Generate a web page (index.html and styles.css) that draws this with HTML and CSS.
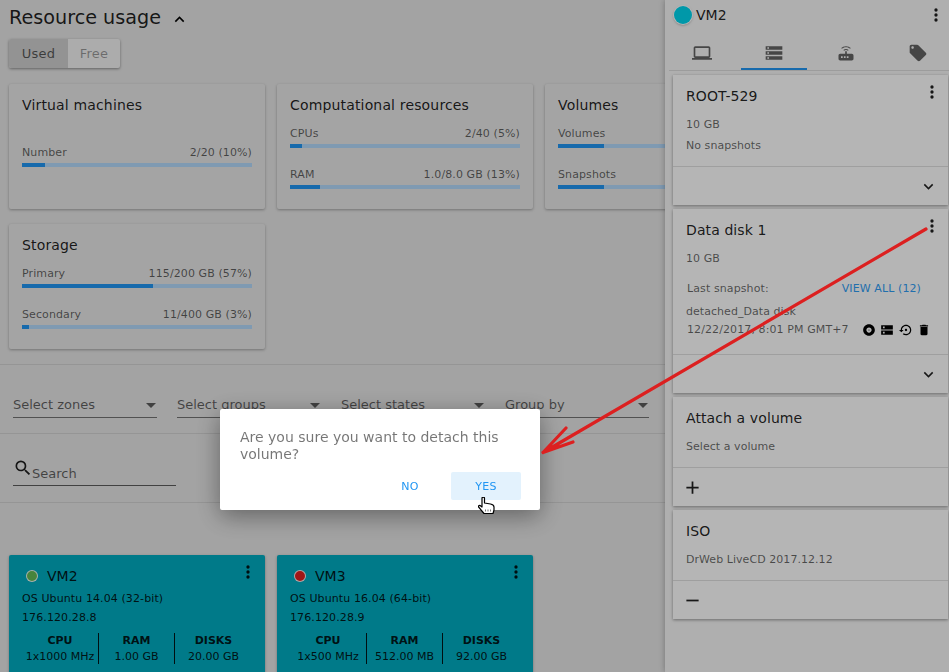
FILE: index.html
```html
<!DOCTYPE html>
<html lang="en">
  <head>
    <meta charset="UTF-8" />
    <meta name="viewport" content="width=device-width, initial-scale=1.0" />
    <title>Resource usage</title>
    <link rel="stylesheet" href="styles.css">
  </head>
  <body>
    <div id="wrap">
      <div id="main">
        <div class="head">
          <h1>Resource usage</h1>
          <svg class="chevron" viewBox="0 0 24 24" width="19" height="19"><path d="M7.41 15.41 12 10.83l4.59 4.58L18 14l-6-6-6 6z"/></svg>
        </div>
        <div class="toggle">
          <span class="on">Used</span>
          <span class="off">Free</span>
        </div>

        <div class="stats">
          <div class="stat">
            <h2>Virtual machines</h2>
            <div class="meter first_meter">
              <div class="meter_label"><span>Number</span><span>2/20 (10%)</span></div>
              <div class="bar"><div class="fill" style="width: 10%"></div></div>
            </div>
          </div>
          <div class="stat">
            <h2>Computational resources</h2>
            <div class="meter">
              <div class="meter_label"><span>CPUs</span><span>2/40 (5%)</span></div>
              <div class="bar"><div class="fill" style="width: 5%"></div></div>
            </div>
            <div class="meter">
              <div class="meter_label"><span>RAM</span><span>1.0/8.0 GB (13%)</span></div>
              <div class="bar"><div class="fill" style="width: 13%"></div></div>
            </div>
          </div>
          <div class="stat">
            <h2>Volumes</h2>
            <div class="meter">
              <div class="meter_label"><span>Volumes</span></div>
              <div class="bar"><div class="fill" style="width: 20%"></div></div>
            </div>
            <div class="meter">
              <div class="meter_label"><span>Snapshots</span></div>
              <div class="bar"><div class="fill" style="width: 20%"></div></div>
            </div>
          </div>
          <div class="stat">
            <h2>Storage</h2>
            <div class="meter">
              <div class="meter_label"><span>Primary</span><span>115/200 GB (57%)</span></div>
              <div class="bar"><div class="fill" style="width: 57%"></div></div>
            </div>
            <div class="meter">
              <div class="meter_label"><span>Secondary</span><span>11/400 GB (3%)</span></div>
              <div class="bar"><div class="fill" style="width: 3%"></div></div>
            </div>
          </div>
        </div>

        <div class="filters">
          <div class="select"><span>Select zones</span><i class="caret"></i></div>
          <div class="select"><span>Select groups</span><i class="caret"></i></div>
          <div class="select"><span>Select states</span><i class="caret"></i></div>
          <div class="select"><span>Group by</span><i class="caret"></i></div>
        </div>

        <div class="search_row">
          <div class="search">
            <svg viewBox="0 0 24 24" width="20" height="20"><path d="M15.5 14h-.79l-.28-.27A6.47 6.47 0 0 0 16 9.5 6.5 6.5 0 1 0 9.5 16c1.61 0 3.09-.59 4.23-1.57l.27.28v.79l5 4.99L20.49 19l-4.99-5zm-6 0C7.01 14 5 11.99 5 9.5S7.01 5 9.5 5 14 7.01 14 9.5 11.99 14 9.5 14z"/></svg>
            <span>Search</span>
          </div>
        </div>

        <div class="vms">
          <div class="vm">
            <div class="vm_title">
              <i class="dot green"></i><span>VM2</span>
              <svg class="dots" viewBox="0 0 24 24" width="20" height="20"><path d="M12 8a2 2 0 1 0 0-4 2 2 0 0 0 0 4zm0 2a2 2 0 1 0 0 4 2 2 0 0 0 0-4zm0 6a2 2 0 1 0 0 4 2 2 0 0 0 0-4z"/></svg>
            </div>
            <p>OS Ubuntu 14.04 (32-bit)</p>
            <p>176.120.28.8</p>
            <div class="specs">
              <div class="spec"><b>CPU</b><span>1x1000 MHz</span></div>
              <div class="spec"><b>RAM</b><span>1.00 GB</span></div>
              <div class="spec"><b>DISKS</b><span>20.00 GB</span></div>
            </div>
          </div>
          <div class="vm">
            <div class="vm_title">
              <i class="dot red"></i><span>VM3</span>
              <svg class="dots" viewBox="0 0 24 24" width="20" height="20"><path d="M12 8a2 2 0 1 0 0-4 2 2 0 0 0 0 4zm0 2a2 2 0 1 0 0 4 2 2 0 0 0 0-4zm0 6a2 2 0 1 0 0 4 2 2 0 0 0 0-4z"/></svg>
            </div>
            <p>OS Ubuntu 16.04 (64-bit)</p>
            <p>176.120.28.9</p>
            <div class="specs">
              <div class="spec"><b>CPU</b><span>1x500 MHz</span></div>
              <div class="spec"><b>RAM</b><span>512.00 MB</span></div>
              <div class="spec"><b>DISKS</b><span>92.00 GB</span></div>
            </div>
          </div>
        </div>
      </div>

      <div id="side">
        <div class="side_head">
          <i class="vm_color"></i>
          <span>VM2</span>
          <svg class="dots" viewBox="0 0 24 24" width="20" height="20"><path d="M12 8a2 2 0 1 0 0-4 2 2 0 0 0 0 4zm0 2a2 2 0 1 0 0 4 2 2 0 0 0 0-4zm0 6a2 2 0 1 0 0 4 2 2 0 0 0 0-4z"/></svg>
        </div>
        <div class="tabs">
          <div class="tab">
            <svg viewBox="0 0 24 24" width="20" height="20"><path d="M20 18c1.100 0 2-.9 2-2V6c0-1.100-.9-2-2-2H4c-1.100 0-2 .9-2 2v10c0 1.100.9 2 2 2H0v2h24v-2h-4zM4 6h16v10H4V6z"/></svg>
          </div>
          <div class="tab active">
            <svg viewBox="0 0 24 24" width="20" height="20"><path d="M2 20h20v-4H2v4zm2-3h2v2H4v-2zM2 4v4h20V4H2zm4 3H4V5h2v2zm-4 7h20v-4H2v4zm2-3h2v2H4v-2z"/></svg>
          </div>
          <div class="tab">
            <svg viewBox="0 0 24 24" width="20" height="20"><path d="M16.900 6.900l.8-.8C16.700 5.100 14.400 3.900 12 3.900s-4.700 1.200-5.700 2.200l.8.8C8.100 6 10 5.200 12 5.200s3.900.8 4.900 1.700zm-1.700 1.500c-.9-.8-2-1.200-3.200-1.200s-2.300.4-3.200 1.200l.9.9c.6-.5 1.400-.8 2.300-.8s1.700.3 2.300.8l.9-.9zM19 13h-6V10h-2v3H5c-1.100 0-2 .9-2 2v4c0 1.100.9 2 2 2h14c1.100 0 2-.9 2-2v-4c0-1.100-.9-2-2-2zM8 18H6v-2h2v2zm3.500 0h-2v-2h2v2zm3.500 0h-2v-2h2v2z"/></svg>
          </div>
          <div class="tab">
            <svg viewBox="0 0 24 24" width="20" height="20"><path d="M21.410 11.580l-9-9C12.050 2.220 11.550 2 11 2H4c-1.100 0-2 .9-2 2v7c0 .55.22 1.050.59 1.420l9 9c.36.36.86.58 1.410.58.55 0 1.050-.22 1.410-.59l7-7c.37-.36.59-.86.59-1.410 0-.55-.23-1.060-.59-1.420zM5.500 7C4.670 7 4 6.330 4 5.500S4.670 4 5.500 4 7 4.670 7 5.500 6.330 7 5.500 7z"/></svg>
          </div>
        </div>

        <div class="card">
          <div class="card_body">
            <div class="card_title">
              <h3>ROOT-529</h3>
              <svg class="dots" viewBox="0 0 24 24" width="20" height="20"><path d="M12 8a2 2 0 1 0 0-4 2 2 0 0 0 0 4zm0 2a2 2 0 1 0 0 4 2 2 0 0 0 0-4zm0 6a2 2 0 1 0 0 4 2 2 0 0 0 0-4z"/></svg>
            </div>
            <p>10 GB</p>
            <p>No snapshots</p>
          </div>
          <div class="card_foot right">
            <svg viewBox="0 0 24 24" width="19" height="19"><path d="M7.41 8.590 12 13.170l4.590-4.580L18 10l-6 6-6-6z"/></svg>
          </div>
        </div>

        <div class="card">
          <div class="card_body disk">
            <div class="card_title">
              <h3>Data disk 1</h3>
              <svg class="dots" viewBox="0 0 24 24" width="20" height="20"><path d="M12 8a2 2 0 1 0 0-4 2 2 0 0 0 0 4zm0 2a2 2 0 1 0 0 4 2 2 0 0 0 0-4zm0 6a2 2 0 1 0 0 4 2 2 0 0 0 0-4z"/></svg>
            </div>
            <p>10 GB</p>
            <div class="snap_head"><span>Last snapshot:</span><a>VIEW ALL (12)</a></div>
            <p class="snap_name">detached_Data disk</p>
            <div class="snap_row">
              <span>12/22/2017, 8:01 PM GMT+7</span>
              <div class="snap_icons">
                <svg viewBox="0 0 24 24" width="14" height="14"><path d="M12 2C6.480 2 2 6.480 2 12s4.480 10 10 10 10-4.480 10-10S17.520 2 12 2zm0 14.500c-2.490 0-4.500-2.010-4.500-4.500S9.510 7.500 12 7.500s4.500 2.010 4.500 4.500-2.010 4.500-4.500 4.500zm0-5.500c-.55 0-1 .45-1 1s.45 1 1 1 1-.45 1-1-.45-1-1-1z"/></svg>
                <svg viewBox="0 0 24 24" width="14" height="14"><path d="M2 20h20v-7H2v7zm3-5h3v3H5v-3zM2 4v7h20V4H2zm6 5H5V6h3v3z"/></svg>
                <svg viewBox="0 0 24 24" width="14" height="14"><path d="M14 12c0-1.100-.9-2-2-2s-2 .9-2 2 .9 2 2 2 2-.9 2-2zm-2-9c-4.970 0-9 4.030-9 9H0l4 4 4-4H5c0-3.870 3.130-7 7-7s7 3.130 7 7-3.130 7-7 7c-1.510 0-2.910-.49-4.060-1.300l-1.420 1.440C8.040 20.300 9.940 21 12 21c4.970 0 9-4.030 9-9s-4.030-9-9-9z"/></svg>
                <svg viewBox="0 0 24 24" width="14" height="14"><path d="M6 19c0 1.100.9 2 2 2h8c1.100 0 2-.9 2-2V7H6v12zM19 4h-3.500l-1-1h-5l-1 1H5v2h14V4z"/></svg>
              </div>
            </div>
          </div>
          <div class="card_foot right">
            <svg viewBox="0 0 24 24" width="19" height="19"><path d="M7.41 8.590 12 13.170l4.590-4.580L18 10l-6 6-6-6z"/></svg>
          </div>
        </div>

        <div class="card">
          <div class="card_body short">
            <div class="card_title"><h3>Attach a volume</h3></div>
            <p>Select a volume</p>
          </div>
          <div class="card_foot">
            <svg viewBox="0 0 24 24" width="21" height="21"><path d="M19 13h-6v6h-2v-6H5v-2h6V5h2v6h6v2z"/></svg>
          </div>
        </div>

        <div class="card">
          <div class="card_body short">
            <div class="card_title"><h3>ISO</h3></div>
            <p>DrWeb LiveCD 2017.12.12</p>
          </div>
          <div class="card_foot">
            <svg viewBox="0 0 24 24" width="21" height="21"><path d="M19 13H5v-2h14v2z"/></svg>
          </div>
        </div>
      </div>
    </div>

    <div id="backdrop"></div>

    <div id="dialog">
      <p>Are you sure you want to detach this volume?</p>
      <div class="dialog_btns">
        <button class="no">NO</button>
        <button class="yes">YES</button>
      </div>
    </div>

    <svg id="arrow" viewBox="0 0 949 672" width="949" height="672">
      <path d="M926 229 L543 452.500 M543 452.500 L566 428 M543 452.500 L573 442" fill="none" stroke="#dc2020" stroke-width="3.200" stroke-linecap="round"/>
    </svg>

    <svg id="hand" viewBox="0 0 18 17" width="18" height="17">
      <path d="M4 1.200c0-.7.5-1.100 1.200-1.100s1.300.4 1.300 1.100V6l6 1c2 .4 3.500 1 3.500 3v3l-1 3.500H6L.6 10c-.6-1 .6-2 1.500-1.500L4 10z" fill="#fff" stroke="#000" stroke-width="1.200" stroke-linejoin="round"/>
      <path d="M7.500 12.500v2M10 12.500v2M12.500 12.500v2" stroke="#777" stroke-width="1"/>
    </svg>
  </body>
</html>
```

FILE: styles.css
```css
* {
  box-sizing: border-box;
}

body {
  margin: 0;
  height: 672px;
  overflow: hidden;
  font-family: "DejaVu Sans", sans-serif;
  color: rgba(0, 0, 0, 0.87);
  background-color: #e6e6e6;
}

h1,
h2,
h3,
p {
  margin: 0;
  font-weight: normal;
}

#wrap {
  display: flex;
  height: 672px;
}

#main {
  flex: 1;
  min-width: 0;
  overflow: hidden;
}

.head {
  display: flex;
  align-items: center;
  height: 39px;
  padding-left: 9px;
}

.head h1 {
  font-size: 19.2px;
  margin-bottom: 5px;
}

.chevron {
  margin-left: 9px;
}

.toggle {
  display: inline-flex;
  margin-left: 9px;
  height: 29px;
  font-size: 13px;
  line-height: 29px;
  border-radius: 2px;
  overflow: hidden;
  box-shadow: 0 1px 3px rgba(0, 0, 0, 0.4);
  background-color: #f2f2f2;
}

.toggle span {
  text-align: center;
  letter-spacing: 0.2px;
}

.on {
  width: 59px;
  color: rgba(0, 0, 0, 0.6);
  background-color: #cfcfcf;
}

.off {
  width: 52px;
  color: rgba(0, 0, 0, 0.38);
}

.stats {
  display: flex;
  flex-wrap: wrap;
  gap: 15px 12px;
  width: 820px;
  margin-top: 16px;
  padding-left: 9px;
}

.stat {
  width: 256px;
  height: 125px;
  padding: 13px 13px 0;
  border-radius: 2px;
  background-color: #e8e8e8;
  box-shadow: 0 1px 3px rgba(0, 0, 0, 0.3);
}

.stat h2 {
  font-size: 14px;
  line-height: 17px;
  letter-spacing: 0.16px;
  margin-bottom: 13px;
}

.meter {
  margin-bottom: 20px;
}

.first_meter {
  padding-top: 19px;
}

.meter_label {
  display: flex;
  justify-content: space-between;
  font-size: 11px;
  line-height: 13px;
  letter-spacing: 0.1px;
  margin-bottom: 4px;
  color: rgba(0, 0, 0, 0.6);
}

.bar {
  height: 4px;
  background-color: #b3d9fb;
}

.fill {
  height: 4px;
  background-color: #2196f3;
}

.filters {
  display: flex;
  gap: 20px;
  width: 100%;
  height: 70px;
  margin-top: 15px;
  padding: 30px 0 0 13px;
  border-top: 1px solid #d2d2d2;
  border-bottom: 1px solid #d2d2d2;
}

.select {
  display: flex;
  justify-content: space-between;
  width: 144px;
  height: 23px;
  font-size: 13px;
  line-height: 20px;
  flex-shrink: 0;
  color: rgba(0, 0, 0, 0.6);
  border-bottom: 1px solid rgba(0, 0, 0, 0.5);
}

.caret {
  width: 0;
  height: 0;
  margin: 8px 1px 0 0;
  border-left: 5px solid transparent;
  border-right: 5px solid transparent;
  border-top: 5px solid rgba(0, 0, 0, 0.6);
}

.search_row {
  height: 69px;
  padding: 26px 0 0 13px;
  border-bottom: 1px solid #d2d2d2;
}

.search {
  display: flex;
  width: 163px;
  height: 26px;
  font-size: 13px;
  line-height: 27px;
  color: rgba(0, 0, 0, 0.6);
  border-bottom: 1px solid rgba(0, 0, 0, 0.6);
}

.search svg {
  flex-shrink: 0;
  margin-top: -2px;
  margin-right: -1px;
  fill: rgba(0, 0, 0, 0.87);
}

.vms {
  display: flex;
  gap: 12px;
  padding: 52px 0 0 9px;
}

.vm {
  width: 256px;
  height: 130px;
  padding: 9px 13px;
  border-radius: 2px;
  color: rgba(0, 0, 0, 0.87);
  background-color: #00acc1;
  box-shadow: 0 1px 3px rgba(0, 0, 0, 0.3);
}

.vm p {
  font-size: 11px;
  line-height: 19px;
  letter-spacing: 0.1px;
}

.vm_title {
  display: flex;
  align-items: center;
  height: 24px;
  margin-bottom: 1px;
  font-size: 14px;
}

.dot {
  width: 10px;
  height: 10px;
  margin-left: 4px;
  margin-right: 9px;
  border-radius: 50%;
  border: 1px solid rgba(255, 255, 255, 0.9);
  box-sizing: content-box;
}

.green {
  background-color: #66bb55;
}

.red {
  background-color: #e02020;
}

.vm_title .dots {
  margin-left: auto;
  margin-right: -6px;
  margin-top: -9px;
}

.specs {
  display: flex;
  margin-top: 6px;
  font-size: 11px;
  text-align: center;
}

.spec {
  display: flex;
  flex-direction: column;
  height: 31px;
  line-height: 16px;
  white-space: nowrap;
  flex: 1;
  border-left: 1px solid rgba(0, 0, 0, 0.87);
}

.spec:first-child {
  border-left: none;
  flex: 0 0 76px;
}

.spec:nth-child(2) {
  flex: 0 0 76px;
}

#side {
  width: 284px;
  height: 672px;
  flex-shrink: 0;
  padding: 0 0 0 8px;
  background-color: #f7f7f7;
  box-shadow: 0 0 6px rgba(0, 0, 0, 0.3);
  overflow: hidden;
}

.side_head {
  display: flex;
  align-items: center;
  height: 30px;
  font-size: 14px;
}

.vm_color {
  width: 18px;
  height: 18px;
  margin-left: 1px;
  margin-right: 4px;
  border-radius: 50%;
  background-color: #00d6ef;
  box-shadow: 0 0 0 1px #fff, 0 1px 3px rgba(0, 0, 0, 0.4);
}

.side_head .dots {
  margin-left: auto;
  margin-right: 3px;
}

.tabs {
  display: flex;
  gap: 6px;
  height: 41px;
  margin-left: -4px;
  border-bottom: 1px solid #dcdcdc;
}

.tab {
  display: flex;
  align-items: center;
  justify-content: center;
  flex-shrink: 0;
  width: 66px;
  padding-top: 8px;
  border-bottom: 2px solid transparent;
  fill: rgba(0, 0, 0, 0.6);
}

.active {
  border-bottom-color: #2196f3;
}

.card {
  width: 275px;
  margin-top: 4px;
  background-color: #fff;
  box-shadow: 0 1px 3px rgba(0, 0, 0, 0.4);
}

.card_body {
  height: 92px;
  padding: 0 13px;
  border-bottom: 1px solid #e0e0e0;
}

.disk {
  height: 146px;
}

.short {
  height: 71px;
}

.card_title {
  display: flex;
  justify-content: space-between;
  align-items: flex-start;
  height: 39px;
  padding-top: 12px;
}

.card_title h3 {
  font-size: 14px;
  line-height: 18px;
  letter-spacing: 0.1px;
}

.card_title .dots {
  margin-right: -7px;
  margin-top: -5px;
}

.card_body p {
  font-size: 11px;
  line-height: 21px;
  letter-spacing: 0.05px;
  color: rgba(0, 0, 0, 0.6);
}

.snap_head {
  display: flex;
  justify-content: space-between;
  margin-top: 10px;
  padding-left: 1px;
  padding-right: 14px;
  font-size: 11px;
  line-height: 20px;
  letter-spacing: 0.1px;
  color: rgba(0, 0, 0, 0.6);
}

.snap_head a {
  color: #2f9df4;
}

.card_body .snap_name {
  margin-top: 3px;
  line-height: 20px;
}

.snap_row {
  display: flex;
  justify-content: space-between;
  align-items: center;
  font-size: 11px;
  line-height: 16px;
  letter-spacing: 0.1px;
  padding-left: 1px;
  color: rgba(0, 0, 0, 0.6);
}

.snap_icons {
  display: flex;
  gap: 4.5px;
  margin-right: 4px;
}

.card_foot {
  display: flex;
  align-items: center;
  height: 38px;
  padding: 0 13px;
}

.right {
  justify-content: flex-end;
  padding-right: 10px;
}

.card_foot svg {
  fill: rgba(0, 0, 0, 0.87);
}

.card_foot:not(.right) svg {
  margin-left: -4px;
}

.dots {
  fill: rgba(0, 0, 0, 0.87);
}

#backdrop {
  position: fixed;
  top: 0;
  left: 0;
  width: 100%;
  height: 100%;
  background-color: rgba(0, 0, 0, 0.29);
}

#dialog {
  position: fixed;
  top: 409px;
  left: 220px;
  width: 320px;
  height: 101px;
  padding: 20px 19px 0 20px;
  border-radius: 2px;
  background-color: #fff;
  box-shadow: 0 6px 24px rgba(0, 0, 0, 0.4);
}

#dialog p {
  font-size: 14px;
  line-height: 17px;
  color: rgba(0, 0, 0, 0.54);
}

.dialog_btns {
  display: flex;
  justify-content: flex-end;
  margin-top: 9px;
}

.dialog_btns button {
  width: 70px;
  height: 28px;
  padding: 0;
  border: 0;
  border-radius: 2px;
  font-family: inherit;
  font-size: 11px;
  letter-spacing: 0.2px;
  color: #2196f3;
  background-color: transparent;
}

.dialog_btns .no {
  width: 64px;
  margin-right: 9px;
}

.dialog_btns .yes {
  background-color: #e3f2fd;
}

#arrow {
  position: fixed;
  top: 0;
  left: 0;
  pointer-events: none;
}

#hand {
  position: fixed;
  top: 497px;
  left: 478px;
}
```
